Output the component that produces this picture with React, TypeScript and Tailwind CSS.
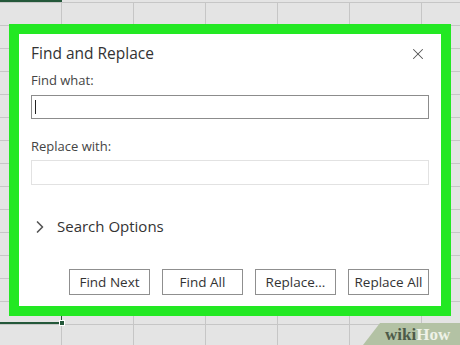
import { X, ChevronRight } from 'lucide-react';

const COLS = [62, 72, 72, 72, 72, 72, 72];
const ROWS = 15;

function Sheet() {
  return (
    <div className="flex flex-col pt-[2px]">
      {Array.from({ length: ROWS }).map((_, r) => (
        <div key={r} className="flex h-[23px] border-t border-[#c6c6c6]">
          {COLS.map((w, c) => (
            <div
              key={c}
              style={{ width: w }}
              className="shrink-0 h-full border-r border-[#c6c6c6]"
            />
          ))}
        </div>
      ))}
    </div>
  );
}

export default function App() {
  return (
    <div
      className="relative w-[460px] h-[345px] overflow-hidden bg-[#e4e4e4]"
      style={{ fontFamily: '"Open Sans", "Noto Sans", sans-serif' }}
    >
      <Sheet />

      {/* selected cell markers */}
      <div className="absolute left-0 top-0 w-[62px] h-[2px] bg-[#24583a]" />
      <div className="absolute left-0 top-[322px] w-[62px] h-[2px] bg-[#24583a]" />
      <div className="absolute left-[61px] top-[316px] w-[1px] h-[7px] bg-[#24583a]" />
      <div className="absolute left-[59px] top-[320px] w-[6px] h-[6px] bg-[#24583a] border border-white" />

      {/* dialog with highlight frame */}
      <div className="absolute left-[9px] top-[24px] w-[442px] h-[292px] border-[10px] border-[#23e823] bg-white">
        <div className="flex flex-col h-full px-[12px] pt-[8px] pb-[11px]">
          <div className="flex items-center justify-between">
            <span className="text-[15.5px] text-[#333]">Find and Replace</span>
            <X size={18} strokeWidth={1.4} className="text-[#555] mr-[2px] mt-[1px]" />
          </div>

          <label className="mt-[6px] text-[13px] text-[#444]">Find what:</label>
          <div className="mt-[4px] h-[24px] border border-[#8c8c8c] flex items-center pl-[3px]">
            <div className="w-[1px] h-[14px] bg-[#222]" />
          </div>

          <label className="mt-[18px] text-[13px] text-[#444]">Replace with:</label>
          <div className="mt-[4px] h-[25px] border border-[#e2e2e2]" />

          <div className="mt-[30px] flex items-center">
            <ChevronRight size={20} strokeWidth={2} className="text-[#555] -ml-[1px]" />
            <span className="ml-[7px] text-[15px] text-[#333]">Search Options</span>
          </div>

          <div className="mt-auto flex justify-end gap-[12px]">
            {['Find Next', 'Find All', 'Replace...', 'Replace All'].map((t) => (
              <button
                key={t}
                className="w-[81px] h-[26px] border border-[#8f8f8f] bg-white text-[13.5px] text-[#333] flex items-center justify-center"
              >
                {t}
              </button>
            ))}
          </div>
        </div>
      </div>

      {/* watermark */}
      <div className="absolute left-[363px] top-[323px] w-[110px] h-[22px] bg-[#b3c2a4] [clip-path:polygon(17px_0,100%_0,100%_100%,0_100%)] flex items-center pl-[22px]">
        <span
          className="text-[17px] font-bold leading-none"
          style={{ fontFamily: '"Liberation Serif", serif' }}
        >
          <span className="text-[#4d5b49]">wiki</span>
          <span className="text-[#eef2e8]">How</span>
        </span>
      </div>
    </div>
  );
}
